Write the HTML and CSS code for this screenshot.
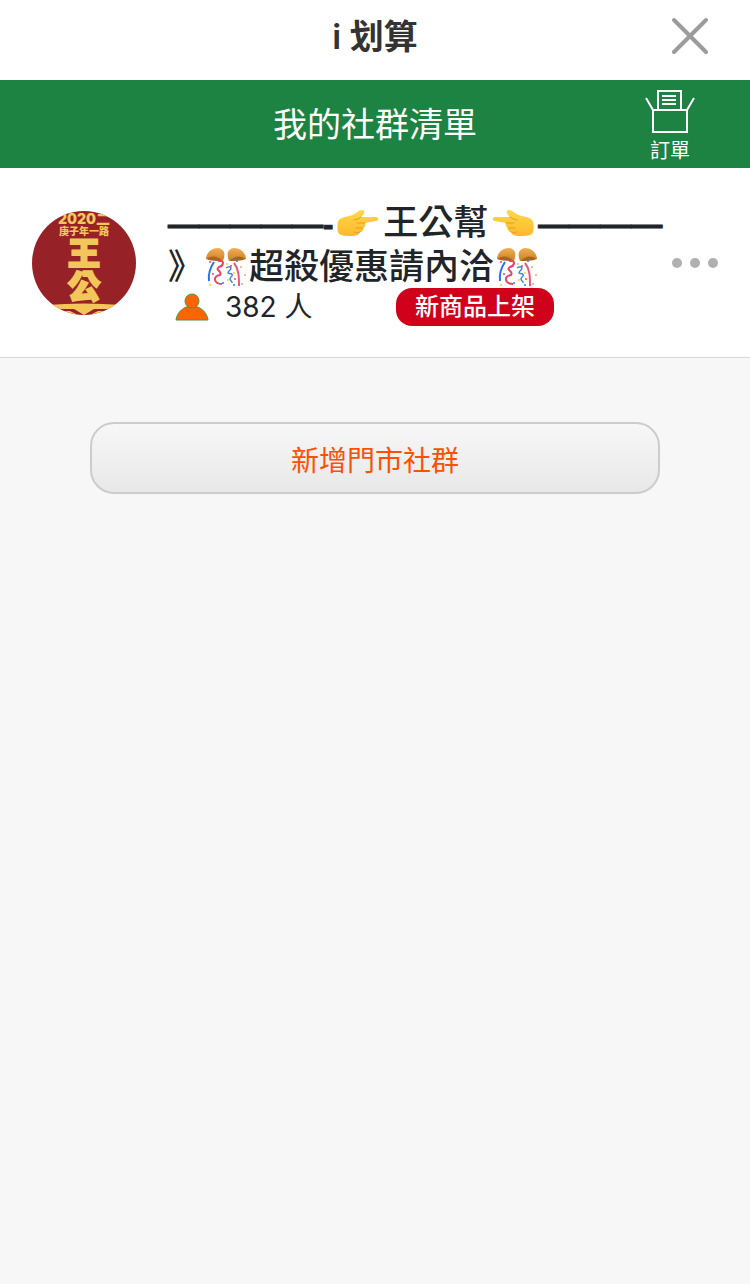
FILE: index.html
```html
<!DOCTYPE html>
<html lang="zh-Hant">
<head>
    <meta charset="UTF-8">
    <meta name="viewport" content="width=device-width, initial-scale=1.0">
    <title>i 划算</title>
    <link rel="stylesheet" href="styles.css">
</head>
<body>
    <svg class="defs" aria-hidden="true">
        <defs>
            <linearGradient id="skin" x1="0" y1="0" x2="0" y2="1">
                <stop offset="0" stop-color="#ffd84a"/>
                <stop offset="1" stop-color="#fdb92c"/>
            </linearGradient>
            <linearGradient id="bell" x1="0" y1="0" x2="0" y2="1">
                <stop offset="0" stop-color="#f3ae50"/>
                <stop offset="1" stop-color="#c98029"/>
            </linearGradient>
            <symbol id="hand" viewBox="0 0 42 28">
                <path d="M1 13C2 9 7 8 12 7C18 6 21 1 25 1C28 1 28 4 26 6L24 8H39C42 8 42 12 39 12L28 14C29 16 28 18 26 19C27 21 25 23 23 23C22 26 19 27 15 27C10 27 5 27 2 25C0 22 0 17 1 13Z" fill="url(#skin)"/>
                <path d="M17 11C20 11 22 9 24 8M28 14H20M26 19H19M23 23C21 24 19 24 17 23" fill="none" stroke="#e99b20" stroke-width="1" stroke-linecap="round"/>
            </symbol>
            <symbol id="confetti" viewBox="0 0 40 40">
                <path d="M0 11C1 5 6 1 12 1C18 2 20 6 17 14C12 9 6 9 0 12ZM40 11C39 5 34 1 28 1C22 2 20 6 23 14C28 9 34 9 40 12Z" fill="url(#bell)"/>
                <path d="M0 12C6 8 12 9 17 14C11 14 5 14 0 12ZM40 12C34 8 28 9 23 14C29 14 35 14 40 12Z" fill="#a8651e"/>
                <path d="M8 15C4 21 2 27 3 34" fill="none" stroke="#2872ed" stroke-width="2"/>
                <path d="M12 14C20 13 17 19 13 20C8 23 17 24 14 28C6 29 8 37 16 37" fill="none" stroke="#ef4266" stroke-width="2"/>
                <path d="M20 21C24 18 27 21 23 24C19 28 28 25 26 29C21 33 27 34 26 36" fill="none" stroke="#3984ef" stroke-width="1.5"/>
                <path d="M28 16C33 22 33 30 33 39" fill="none" stroke="#ee5772" stroke-width="2"/>
                <g fill="#ee4963"><circle cx="4" cy="15" r="1"/><circle cx="7" cy="27" r="1"/><circle cx="25" cy="19" r="1"/><circle cx="29" cy="32" r="1"/></g>
                <g fill="#ffcc32"><circle cx="21" cy="17" r="1"/><circle cx="28" cy="26" r="1"/><circle cx="4" cy="38" r="1"/><circle cx="22" cy="33" r="1"/></g>
                <g fill="#2b78e8"><circle cx="31" cy="14" r="1"/><circle cx="17" cy="36" r="1"/><circle cx="28" cy="38" r="1"/></g>
                <g fill="#f8a17b"><circle cx="35" cy="20" r="1"/><circle cx="39" cy="28" r="1"/><circle cx="36" cy="37" r="1"/></g>
            </symbol>
        </defs>
    </svg>

    <header class="top-bar">
        <h1>i 划算</h1>
        <button type="button" class="close-btn" aria-label="關閉">
            <svg width="40" height="40" viewBox="0 0 40 40"><path d="M4 4L36 36M36 4L4 36" stroke="#9b9b9b" stroke-width="4" stroke-linecap="round"/></svg>
        </button>
    </header>

    <nav class="sub-bar">
        <h2>我的社群清單</h2>
        <a href="#orders" class="order-link">
            <svg width="50" height="46" viewBox="0 0 50 46" fill="none" stroke="#fff" stroke-width="2">
                <path d="M8 19H42V41H8ZM13 19V0H36V19M1 7L8 19M49 7L42 19M17 5H31M17 9H31M17 13H31"/>
            </svg>
            <span>訂單</span>
        </a>
    </nav>

    <main>
        <section class="group">
            <svg class="avatar" viewBox="0 0 104 104" aria-label="王公幫">
                <rect width="104" height="104" fill="#962127"/>
                <g class="avatar-text" text-anchor="middle">
                    <text x="52" y="13" font-size="14">2020二</text>
                    <text x="52" y="24" font-size="10">庚子年一路</text>
                    <text class="big" x="52" y="54" font-size="32">王</text>
                    <text class="big" x="52" y="87" font-size="32">公</text>
                </g>
                <!-- 底部金色裝飾 -->
                <path d="M14 94Q52 91 90 94L84 98H62L52 104L42 98H20ZM28 100H38L46 104H32ZM76 100H66L58 104H72Z" fill="#f2c65a"/>
            </svg>
            <div class="group-info">
                <h3><span class="dash">—————-</span><svg class="hand"><use href="#hand"/></svg>王公幫<svg class="hand flip"><use href="#hand"/></svg><span class="dash">————</span><br>》<svg class="confetti"><use href="#confetti"/></svg>超殺優惠請內洽<svg class="confetti"><use href="#confetti"/></svg></h3>
                <div class="group-meta">
                    <svg class="person" width="34" height="28" viewBox="0 0 34 28" fill="#ff6400" stroke="#55913d" stroke-width="1">
                        <path d="M1 27C2 19 9 13 17 13S32 19 33 27Z"/>
                        <circle cx="17" cy="8" r="7"/>
                    </svg>
                    <span class="count">382 人</span>
                    <span class="badge">新商品上架</span>
                </div>
            </div>
            <button type="button" class="more-btn" aria-label="更多">
                <svg width="48" height="10" viewBox="0 0 48 10" fill="#b0b0b0"><circle cx="6" cy="5" r="5"/><circle cx="24" cy="5" r="5"/><circle cx="42" cy="5" r="5"/></svg>
            </button>
        </section>
        <button type="button" class="add-btn">新增門市社群</button>
    </main>
</body>
</html>
```
FILE: styles.css
```css
* {
    box-sizing: border-box;
}

body {
    margin: 0;
    min-height: 100vh;
    background-color: #f7f7f7;
    color: #212529;
    font-family: Inter, "Noto Sans CJK TC", sans-serif;
}

h1, h2, h3 {
    margin: 0;
}

button {
    padding: 0;
    border: none;
    background: none;
    font-family: inherit;
    cursor: pointer;
}

svg {
    display: block;
    flex-shrink: 0;
    overflow: visible;
}

.defs {
    position: absolute;
    width: 0;
    height: 0;
}

.top-bar, .sub-bar {
    display: grid;
    grid-template-columns: 80px 1fr 80px;
    align-items: center;
    padding: 0 20px;
}

.top-bar {
    height: 80px;
    padding-bottom: 8px;
    background-color: #fff;
}

.top-bar h1 {
    grid-column: 2;
    padding-top: 2px;
    color: #333;
    font-size: 34px;
    font-weight: 600;
    line-height: 48px;
    text-align: center;
}

.close-btn {
    justify-self: center;
}

.sub-bar {
    grid-template-columns: 100px 1fr 100px;
    height: 88px;
    background-color: #1d8343;
    color: #fff;
    padding: 0 30px;
}

.sub-bar h2 {
    grid-column: 2;
    padding-top: 2px;
    font-size: 34px;
    font-weight: 400;
    line-height: 48px;
    text-align: center;
}

.order-link {
    display: flex;
    flex-direction: column;
    align-items: center;
    padding-top: 8px;
    color: #fff;
    font-size: 20px;
    line-height: 28px;
    text-decoration: none;
}

.group {
    display: flex;
    align-items: center;
    padding: 32px 32px 31px;
    border-bottom: 1px solid #d8d8d8;
    background-color: #fff;
}

.avatar {
    width: 104px;
    height: 104px;
    border-radius: 50%;
    overflow: hidden;
}

.avatar-text {
    fill: #f2c65a;
    font-weight: 900;
}

.avatar-text .big {
    stroke: #f2c65a;
    stroke-width: 2px;
}

.group-info {
    flex: 1;
    min-width: 0;
    padding-left: 32px;
}

.group-info h3 {
    font-size: 35px;
    font-weight: 500;
    line-height: 44px;
    white-space: nowrap;
}

.dash {
    font-size: 31px;
    font-family: "Liberation Sans", sans-serif;
    font-weight: 700;
    line-height: 1;
    -webkit-text-stroke: 1px #212529;
}

.hand, .confetti {
    display: inline-block;
    width: 42px;
    height: 28px;
    margin: 0 4px;
    vertical-align: -2px;
}

.confetti {
    width: 40px;
    height: 40px;
    margin: 0 3px;
    vertical-align: -8px;
}

.flip {
    transform: scaleX(-1);
}

.group-meta {
    display: flex;
    align-items: center;
    height: 38px;
}

.person {
    margin: 0 16px 0 7px;
}

.count {
    width: 171px;
    font-size: 28px;
    line-height: 38px;
}

.badge {
    padding: 0 19px;
    border-radius: 16px;
    background-color: #d0021b;
    color: #fff;
    font-size: 24px;
    font-weight: 500;
    line-height: 38px;
}

.more-btn {
    margin-right: -1px;
}

.add-btn {
    display: block;
    width: 76%;
    height: 72px;
    margin: 64px auto 0;
    padding-top: 6px;
    border: 2px solid #ccc;
    border-radius: 24px;
    background: linear-gradient(#f7f7f7, #e8e8e8);
    color: #ff5000;
    font-size: 28px;
    line-height: 40px;
}
```
